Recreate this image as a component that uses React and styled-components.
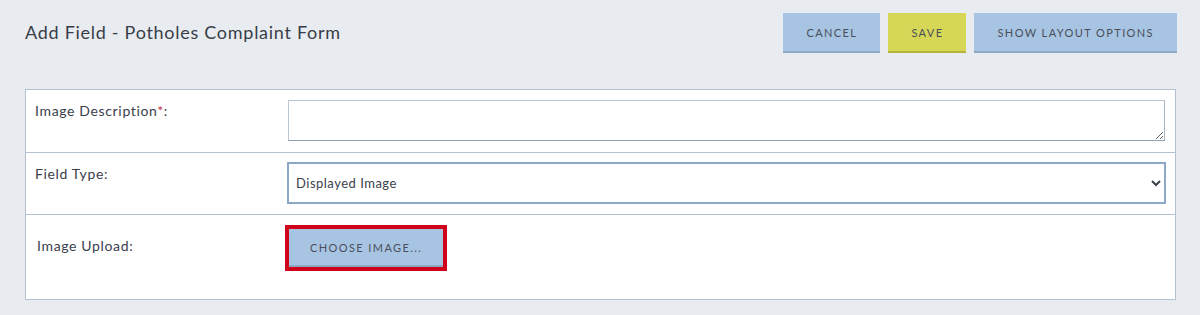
import React from "react";
import styled, { createGlobalStyle } from "styled-components";

const GlobalStyle = createGlobalStyle`
  html, body {
    margin: 0;
    padding: 0;
    background: #e8ecf0;
    font-family: Lato, "Open Sans", "Liberation Sans", sans-serif;
  }
  * { box-sizing: border-box; }
`;

const Page = styled.div`
  width: 1200px;
  padding: 13px 23px 16px 25px;
`;

const Header = styled.header`
  display: flex;
  align-items: center;
  justify-content: space-between;
  height: 40px;
`;

const Title = styled.h1`
  margin: 0 0 3px;
  font-size: 18px;
  font-weight: 400;
  color: #383d48;
  letter-spacing: 0.72px;
`;

const Actions = styled.div`
  display: flex;
  gap: 8px;
`;

const palette = {
  blue: { bg: "#a7c5e2", edge: "#8ea9c8" },
  yellow: { bg: "#d6d757", edge: "#b3b43c" },
};

const Button = styled.button`
  height: ${(p) => p.$h || 40}px;
  padding: 0 ${(p) => p.$px || 23}px;
  border: none;
  border-bottom: 2px solid ${(p) => palette[p.$tone || "blue"].edge};
  background: ${(p) => palette[p.$tone || "blue"].bg};
  color: #4a4e5a;
  font-family: inherit;
  font-size: 11px;
  letter-spacing: 1.4px;
  text-transform: uppercase;
  white-space: nowrap;
  cursor: pointer;
`;

const Card = styled.section`
  margin-top: 36px;
  margin-right: 1px;
  background: #ffffff;
  border: 1px solid #b4c1d0;
`;

const Row = styled.div`
  display: grid;
  grid-template-columns: 262px 1fr;
  min-height: ${(p) => p.$h}px;
  & + & {
    border-top: 1px solid #b4c1d0;
  }
`;

const Label = styled.label`
  padding: ${(p) => p.$top || 10}px 0 0 ${(p) => p.$left || 9}px;
  font-size: 14px;
  line-height: 20px;
  letter-spacing: 0.65px;
  color: #3a404c;
`;

const Req = styled.span`
  color: #c0323f;
`;

const Field = styled.div`
  padding: ${(p) => p.$pad};
`;

const TextArea = styled.textarea`
  display: block;
  width: 100%;
  height: 41px;
  margin: 0;
  border: 1px solid #b9c6d3;
  border-bottom-color: #8fa2b7;
  border-right-color: #a9b6c4;
  font-family: inherit;
  font-size: 13px;
  resize: vertical;
`;

const Select = styled.select`
  display: block;
  width: calc(100% + 2px);
  height: 42px;
  margin: 0 -1px;
  padding: 0 3px;
  border: 2px solid #8ca8c8;
  border-radius: 0;
  background: #ffffff;
  color: #3a404c;
  font-family: inherit;
  font-size: 13px;
  letter-spacing: 0.5px;
`;

const Highlight = styled.div`
  display: inline-block;
  margin-left: 1px;
  outline: 4px solid #d0021b;
`;

const fieldTypes = ["Displayed Image", "Text", "Number", "Date", "Dropdown"];

export default function App() {
  return (
    <>
      <GlobalStyle />
      <Page>
        <Header>
          <Title>Add Field - Potholes Complaint Form</Title>
          <Actions>
            <Button $tone="blue">Cancel</Button>
            <Button $tone="yellow">Save</Button>
            <Button $tone="blue">Show Layout Options</Button>
          </Actions>
        </Header>
        <Card>
          <Row $h={62}>
            <Label htmlFor="desc" $top={11}>
              Image Description<Req>*</Req>:
            </Label>
            <Field $pad="10px 10px 10px 0">
              <TextArea id="desc" />
            </Field>
          </Row>
          <Row $h={62}>
            <Label htmlFor="type" $top={11}>
              Field Type:
            </Label>
            <Field $pad="9px 10px 9px 0">
              <Select id="type" defaultValue="Displayed Image">
                {fieldTypes.map((t) => (
                  <option key={t}>{t}</option>
                ))}
              </Select>
            </Field>
          </Row>
          <Row $h={85}>
            <Label $top={21} $left={11}>
              Image Upload:
            </Label>
            <Field $pad="14px 10px 0 0">
              <Highlight>
                <Button $h={38} $px={21}>
                  Choose Image...
                </Button>
              </Highlight>
            </Field>
          </Row>
        </Card>
      </Page>
    </>
  );
}
